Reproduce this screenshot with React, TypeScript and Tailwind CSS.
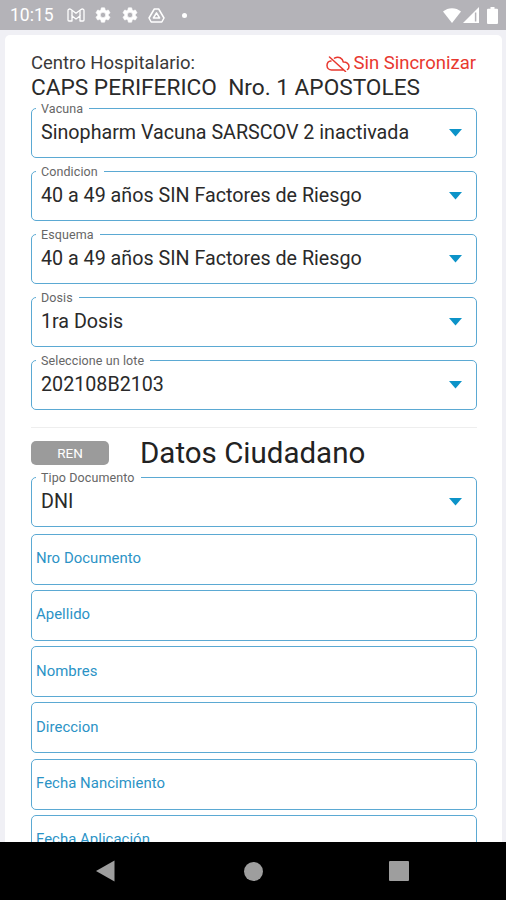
import React from 'react';

interface SelectFieldProps {
  label: string;
  value: string;
}

const SELECTS: SelectFieldProps[] = [
  { label: 'Vacuna', value: 'Sinopharm Vacuna SARSCOV 2 inactivada' },
  { label: 'Condicion', value: '40 a 49 años SIN Factores de Riesgo' },
  { label: 'Esquema', value: '40 a 49 años SIN Factores de Riesgo' },
  { label: 'Dosis', value: '1ra Dosis' },
  { label: 'Seleccione un lote', value: '202108B2103' },
];

const INPUTS = ['Nro Documento', 'Apellido', 'Nombres', 'Direccion', 'Fecha Nancimiento', 'Fecha Aplicación'];

const GearIcon: React.FC = () => (
  <svg className="h-[18px] w-[18px]" viewBox="0 0 24 24" fill="#fff" stroke="#fff" strokeWidth="0.8">
    <path d="M19.14 12.94c.04-.3.06-.61.06-.94s-.02-.64-.07-.94l2.03-1.58c.18-.14.23-.41.12-.61l-1.92-3.32c-.12-.22-.37-.29-.59-.22l-2.39.96c-.5-.38-1.03-.7-1.62-.94l-.36-2.54c-.04-.24-.24-.41-.48-.41h-3.84c-.24 0-.43.17-.47.41l-.36 2.54c-.59.24-1.13.57-1.62.94l-2.39-.96c-.22-.08-.47 0-.59.22L2.74 8.87c-.12.21-.08.47.12.61l2.03 1.58c-.05.3-.09.63-.09.94s.02.64.07.94l-2.03 1.58c-.18.14-.23.41-.12.61l1.92 3.32c.12.22.37.29.59.22l2.39-.96c.5.38 1.03.7 1.62.94l.36 2.54c.05.24.24.41.48.41h3.84c.24 0 .44-.17.47-.41l.36-2.54c.59-.24 1.13-.56 1.62-.94l2.39.96c.22.08.47 0 .59-.22l1.92-3.32c.12-.22.07-.47-.12-.61l-2.01-1.58zM12 15.6A3.6 3.6 0 1 1 12 8.4a3.6 3.6 0 0 1 0 7.2z" />
  </svg>
);

const StatusBar: React.FC = () => (
  <div className="flex h-[30px] shrink-0 items-center justify-between bg-[#b4b3b8] pl-[10px] pr-[8px] text-white">
    <div className="flex items-center">
      <span className="w-[57px] text-[17.500px] leading-[30px]">10:15</span>
      <svg className="h-[14px] w-[18px]" viewBox="0 0 18 14" fill="none" stroke="#fff" strokeWidth="1.3" strokeLinejoin="round">
        <path d="M1 2.500v9.500a1 1 0 0 0 1 1h3V8l4 3 4-3v5h3a1 1 0 0 0 1-1V2.500C17 1 15.200.6 14 1.500L9 5.300 4 1.500C2.800.6 1 1 1 2.500z" />
        <path d="M5 2.500V8M13 2.500V8" />
      </svg>
      <div className="ml-[9px] flex gap-[9px]">
        <GearIcon />
        <GearIcon />
      </div>
      <svg className="ml-[9px] h-[15px] w-[17px]" viewBox="0 0 17 15" fill="none" stroke="#fff" strokeWidth="1.5" strokeLinejoin="round">
        <path d="M6.300 1h4.400L16 10l-2.200 4H3.200L1 10z" />
        <path d="M8.500 4.800l3.100 5.200H5.400z" />
      </svg>
      <span className="ml-[17px] h-[5px] w-[5px] rounded-full bg-white" />
    </div>
    <div className="flex items-center">
      <svg className="h-[15px] w-[18px]" viewBox="0 0 18 15" fill="#fff">
        <path d="M0 3.500C5-1 13-1 18 3.500L9 15z" />
      </svg>
      <svg className="ml-[2px] h-[16px] w-[16px]" viewBox="0 0 16 16">
        <path d="M0 16L16 0v16z" fill="#fff" />
        <path d="M12.600 5.500v9" stroke="#b4b3b8" strokeWidth="1.500" />
      </svg>
      <svg className="ml-[8px] h-[17px] w-[11px]" viewBox="0 0 11 17" fill="#fff">
        <path d="M3.500 0h4v1.800H10a1 1 0 0 1 1 1V16a1 1 0 0 1-1 1H1a1 1 0 0 1-1-1V2.800a1 1 0 0 1 1-1h2.500z" />
      </svg>
    </div>
  </div>
);

const SelectField: React.FC<SelectFieldProps> = ({ label, value }) => (
  <fieldset className="h-[57px] rounded-[5px] border border-[#5ba9d3] px-[4px]">
    <legend className="h-[14px] pl-[5px] pr-[6px] text-[12.500px] leading-[15px] tracking-[0.1px] text-[#666]">{label}</legend>
    <div className="flex items-center justify-between pl-[5px] pr-[10px]">
      <span className="text-[19.700px] leading-[35px] whitespace-nowrap text-[#2a2a2a]">{value}</span>
      <svg className="mt-[1px] h-[8px] w-[13px]" viewBox="0 0 13 8">
        <path d="M0 0h13L6.500 7.500z" fill="#0c93c8" />
      </svg>
    </div>
  </fieldset>
);

const InputField: React.FC<{ label: string }> = ({ label }) => (
  <div className="flex h-[51px] shrink-0 items-center rounded-[5px] border border-[#5ba9d3] px-[4px] pb-[2px] text-[14.900px] tracking-[0.05px] text-[#2b93c6]">
    {label}
  </div>
);

const App: React.FC = () => (
  <div className="flex h-[900px] w-[506px] flex-col overflow-hidden bg-[#f0f0f5] font-['Roboto',sans-serif]">
    <StatusBar />
    <main className="mt-[5px] mr-[4px] ml-[5px] min-h-0 flex-1 overflow-hidden rounded-t-[5px] bg-white pt-[15px] pr-[25px] pl-[26px]">
      <div className="flex h-[25px] items-center justify-between pt-[2px]">
        <span className="text-[18.500px] text-[#3a3a3a]">Centro Hospitalario:</span>
        <span className="flex items-center gap-[3px] pr-[1px] text-[18.500px] text-[#e8382f]">
          <svg className="h-[16px] w-[24px]" viewBox="0 0 24 16" fill="none" stroke="currentColor" strokeWidth="1.500" strokeLinecap="round" strokeLinejoin="round">
            <path d="M5 5C2.700 5.200 1 7 1 9.600 1 12.300 3.200 14 5.500 14h11.500M3.500 1l16 14.500M8.500 2.200C12.500-.2 16.600 2 17.300 6c3-.2 5.700 1.700 5.700 4.500 0 1.300-.5 2.300-1.500 3" />
          </svg>
          Sin Sincronizar
        </span>
      </div>
      <h1 className="h-[25px] text-[22.650px] leading-[25px] whitespace-pre text-[#2a2a2a]">{'CAPS PERIFERICO  Nro. 1 APOSTOLES'}</h1>
      <div className="mt-[1px] flex flex-col gap-[6px]">
        {SELECTS.map(field => (
          <SelectField key={field.label} {...field} />
        ))}
      </div>
      <hr className="mt-[17px] border-[#eeeeee]" />
      <div className="mt-[8px] flex h-[34px] items-center">
        <button className="h-[24px] w-[78px] rounded-[5px] bg-[#9b9b9b] text-[13.500px] text-white">REN</button>
        <h2 className="ml-[31px] text-[29.500px] leading-[34px] text-[#222]">Datos Ciudadano</h2>
      </div>
      <SelectField label="Tipo Documento" value="DNI" />
      <div className="mt-[6.600px] flex flex-col gap-[5.300px]">
        {INPUTS.map(label => (
          <InputField key={label} label={label} />
        ))}
      </div>
    </main>
    <nav className="flex h-[58px] shrink-0 items-center bg-black pl-[96px]">
      <svg className="h-[22px] w-[19px]" viewBox="0 0 19 22" fill="#9e9e9e">
        <path d="M0 11L18.500 0.500v21z" />
      </svg>
      <span className="ml-[129px] h-[19px] w-[19px] rounded-full bg-[#9e9e9e]" />
      <span className="ml-[126px] h-[20px] w-[20px] rounded-[1px] bg-[#9e9e9e]" />
    </nav>
  </div>
);

export default App;
